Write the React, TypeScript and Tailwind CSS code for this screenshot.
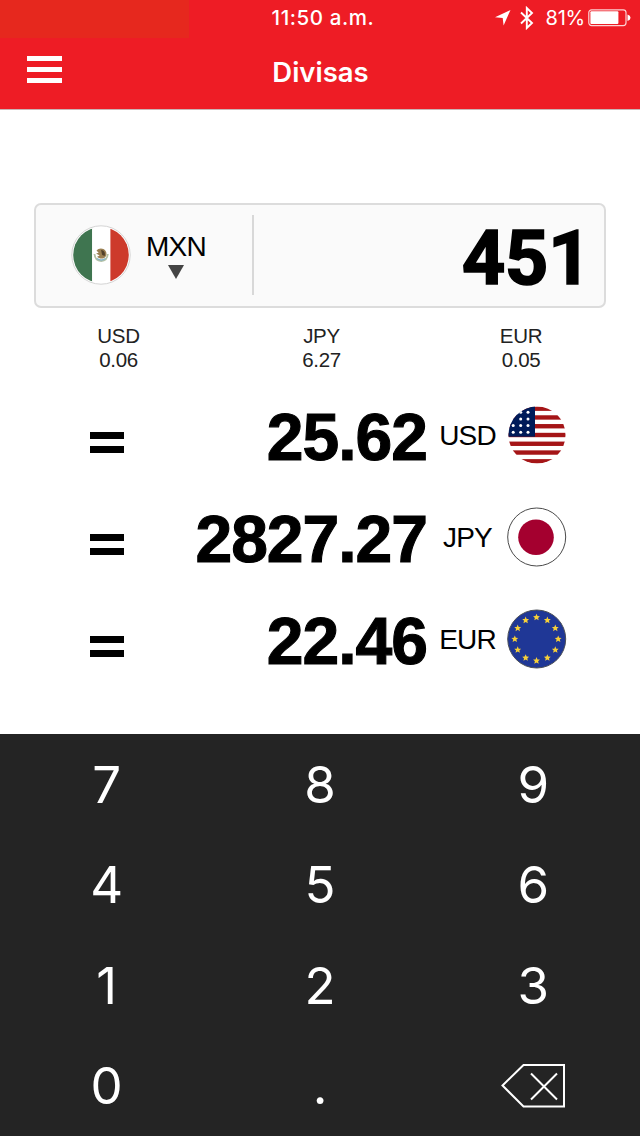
import type { ReactNode } from "react";

function MexicoFlag() {
  return (
    <svg width="60" height="60" viewBox="0 0 60 60">
      <clipPath id="mx"><circle cx="30" cy="30" r="27.8" /></clipPath>
      <circle cx="30" cy="30" r="29.2" fill="#fff" stroke="#d4d4d4" strokeWidth="1" />
      <g clipPath="url(#mx)">
        <rect width="21.2" height="60" fill="#3f7550" />
        <rect x="21.2" width="18.2" height="60" fill="#fff" />
        <rect x="39.4" width="21" height="60" fill="#cd3a2b" />
      </g>
      <path d="M23.500 29c.4 4.500 3 7 6.700 7s6.200-2.700 6.600-7" fill="none" stroke="#b3c0a4" strokeWidth="1.800" />
      <path d="M26 33.500q4.200 3 8.500 0" fill="none" stroke="#86b6c9" strokeWidth="1.500" />
      <path d="M25.500 25.500c2.200-2.800 7-2.700 9 .3 1.700 2.600 1.200 5.700-1.400 7.200-2.400 1.200-5.400.6-7-1.200l2.600-1.400-3.600-1.800 2.600-.8z" fill="#9a7f52" />
      <path d="M30 25c3 .2 4.500 2.500 3.700 6l-2.500-1z" fill="#51402a" />
    </svg>
  );
}

const usStars = [
  [21, 7.3], [13.7, 7.3],
  [21, 14], [13.7, 14],
  [21, 20.4], [13.7, 20.4], [6.2, 20.4],
  [21, 27.2], [13.7, 27.2], [6.2, 27.2],
];

function UsaFlag() {
  return (
    <svg width="60" height="60" viewBox="0 0 60 60">
      <clipPath id="us"><circle cx="30" cy="30" r="28.5" /></clipPath>
      <g clipPath="url(#us)">
        <rect width="60" height="60" fill="#fff" />
        {[0, 1, 2, 3, 4, 5, 6].map((i) => (
          <rect key={i} y={1.5 + i * 8.77} width="60" height="4.38" fill="#a51517" />
        ))}
        <rect width="28" height="31.7" fill="#001b59" />
        {usStars.map(([x, y]) => (
          <circle key={`${x}-${y}`} cx={x} cy={y} r="1.5" fill="#fff" />
        ))}
      </g>
    </svg>
  );
}

function JapanFlag() {
  return (
    <svg width="60" height="60" viewBox="0 0 60 60">
      <circle cx="29.7" cy="30" r="29" fill="#fff" stroke="#4a4a4a" strokeWidth="1" />
      <circle cx="29" cy="30.2" r="17.8" fill="#a4002f" />
    </svg>
  );
}

const starPoints = "0,-3.6 1,-1.2 3.4,-1.1 1.6,0.6 2.2,3 0,1.7 -2.2,3 -1.6,0.6 -3.4,-1.1 -1,-1.2";

function EuroFlag() {
  return (
    <svg width="60" height="60" viewBox="0 0 60 60">
      <circle cx="29.7" cy="30" r="29" fill="#1f3796" stroke="#4b4f57" strokeWidth="1" />
      {Array.from({ length: 12 }, (_, i) => (
        <polygon
          key={i}
          points={starPoints}
          fill="#f7d038"
          transform={`translate(${29.5 + 21.7 * Math.sin((i * Math.PI) / 6)} ${30 - 21.7 * Math.cos((i * Math.PI) / 6)})`}
        />
      ))}
    </svg>
  );
}

function Rate({ code, value }: { code: string; value: string }) {
  return (
    <div className="w-[60px] text-center text-[20.5px] leading-[24px] tracking-[-0.3px] text-[#222]">
      <div>{code}</div>
      <div>{value}</div>
    </div>
  );
}

function Conversion({ value, code, flag }: { value: string; code: string; flag: ReactNode }) {
  return (
    <div className="flex h-[102px] items-center pr-[73px] pl-[88px]">
      <div className="flex w-[38px] flex-col items-center gap-[7px] pt-[14px]">
        <div className="h-[7px] w-[34px] bg-black" />
        <div className="h-[7px] w-[34px] bg-black" />
      </div>
      <div className="flex-1 pt-[3px] text-right text-[66px] leading-[66px] font-bold tracking-[-1px] [-webkit-text-stroke:1.1px_black]">{value}</div>
      <div className="w-[80px] pt-px pl-px text-center text-[28px] tracking-[-0.8px]">{code}</div>
      {flag}
    </div>
  );
}

const keys = ["7", "8", "9", "4", "5", "6", "1", "2", "3", "0", "."];

export default function App() {
  return (
    <div className="flex h-[1136px] w-[640px] flex-col overflow-hidden bg-white font-['Liberation_Sans',sans-serif] text-black">
      <header className="h-[109px] shrink-0 bg-[#ee1c25] font-['Inter',sans-serif] text-white">
        <div className="grid h-[38px] grid-cols-[189px_1fr_189px]">
          <div className="bg-[#e6281e]" />
          <div className="pt-[3px] pl-[6px] text-center text-[20.5px] leading-[30px] font-medium tracking-[0.6px]">11:50 a.m.</div>
          <div className="flex items-start justify-end pr-[9px]">
            <svg className="mt-[10px]" width="16" height="16" viewBox="0 0 16 16"><path d="M15.500 0 8.600 15.500 7.700 8 0 7.200z" fill="#fff" /></svg>
            <svg className="mt-[6px] ml-[9px]" width="14" height="24" viewBox="0 0 14 24"><path d="M1 6.500 12 17l-5.200 5V2L12 7 1 17.500" fill="none" stroke="#fff" strokeWidth="1.900" /></svg>
            <span className="ml-[11px] pt-[3px] text-[20px] leading-[30px] tracking-[-0.2px]">81%</span>
            <svg className="mt-[9px] ml-[3px]" width="43" height="18" viewBox="0 0 43 18">
              <rect x=".8" y=".8" width="37.200" height="15.800" rx="2.800" fill="none" stroke="#fff" strokeOpacity=".8" strokeWidth="1.200" />
              <rect x="2.400" y="2.300" width="28" height="12.800" rx="1" fill="#fff" />
              <path d="M39.500 5.500q3 1 3 3.200t-3 3.200z" fill="#fff" />
            </svg>
          </div>
        </div>
        <div className="grid h-[71px] grid-cols-[189px_1fr_189px]">
          <div className="flex flex-col gap-[6px] pt-[18px] pl-[27px]">
            <div className="h-[5px] w-[35px] bg-white" />
            <div className="h-[5px] w-[35px] bg-white" />
            <div className="h-[5px] w-[35px] bg-white" />
          </div>
          <div className="pt-[14px] pl-[1px] text-center text-[27.5px] leading-[40px] font-semibold">Divisas</div>
        </div>
      </header>
      <main className="h-[625px] shrink-0 border-t border-[#c9b5b5]">
        <div className="mx-[34px] mt-[93px] flex h-[105px] items-center rounded-[7px] border-2 border-[#dcdcdc] bg-[#fafafa] pb-[2px]">
          <div className="flex h-[80px] w-[218px] items-center border-r-2 border-[#d8d8d8] pl-[35px]">
            <MexicoFlag />
            <div className="ml-[15px] flex flex-col items-center pt-[3px]">
              <div className="text-[28px] leading-[28px] tracking-[-0.8px]">MXN</div>
              <svg className="mt-[4px]" width="16" height="14" viewBox="0 0 16 14"><path d="M0 0h16L8 14z" fill="#444" /></svg>
            </div>
          </div>
          <div className="flex-1 pt-[8px] pr-[13px] text-right font-['Roboto',sans-serif] text-[76px] leading-[77px] font-bold tracking-[-0.5px] [-webkit-text-stroke:1.6px_black]">451</div>
        </div>
        <div className="mt-[16px] flex pl-[88.5px]">
          <Rate code="USD" value="0.06" />
          <div className="w-[143px]" />
          <Rate code="JPY" value="6.27" />
          <div className="w-[139.5px]" />
          <Rate code="EUR" value="0.05" />
        </div>
        <div className="mt-[12px]">
          <Conversion value="25.62" code="USD" flag={<UsaFlag />} />
          <Conversion value="2827.27" code="JPY" flag={<JapanFlag />} />
          <Conversion value="22.46" code="EUR" flag={<EuroFlag />} />
        </div>
      </main>
      <div className="grid h-[402px] shrink-0 grid-cols-3 grid-rows-4 bg-[#242424] font-['Inter',sans-serif] text-[51px] text-white">
        {keys.map((key) => (
          <div key={key} className="flex items-center justify-center pt-px">{key}</div>
        ))}
        <div className="flex items-center justify-center">
          <svg width="66" height="46" viewBox="0 0 66 46" fill="none" stroke="#fff" strokeWidth="2">
            <path d="M23.500 2H64v41.500H23.500L2.500 22.500zM31 10.500l26 26M57 10.500l-26 26" />
          </svg>
        </div>
      </div>
    </div>
  );
}
